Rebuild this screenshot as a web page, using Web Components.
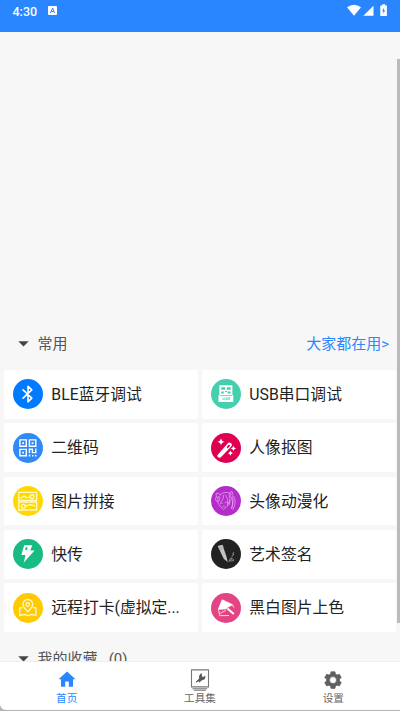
<!DOCTYPE html>
<html lang="zh-CN">
<head>
<meta charset="utf-8">
<title>工具</title>
<style>
html,body{margin:0;height:100%;overflow:hidden}
body{font-family:Roboto,"Noto Sans CJK SC",sans-serif;background:#b4b4b4}
</style>
</head>
<body>
<tool-app></tool-app>
<script>
const define = (name, render) => customElements.define(name, class extends HTMLElement {
  connectedCallback() {
    if (this.shadowRoot) return;
    this.attachShadow({mode: 'open'}).innerHTML = render(this);
  }
});

const icons = {
  bluetooth: ['#007bff', '<path d="M10 10.9l8.8 8.3L15 22.8V7.2l3.8 3.7L10 19.2" fill="none" stroke="#fff" stroke-width="1.6" stroke-linejoin="round" stroke-linecap="round"/>'],
  usb: ['#45cfae', '<path d="M8.4 6.3h13v9.9h.9v6.8H7.5v-6.8h.9z" fill="#fff"/><path d="M10.2 8.2h4v2.6h-4zM15.8 8.2h3.8v2.6h-3.8zM10.2 12.6h2.6v1.8h-2.6zM14 12h2v1h-2zM16.6 12.6h3v1.8h-3zM9 16.2h12v.7H9z" fill="#45cfae"/><path d="M11.8 18.8v1.7h1.8v-1.7M16.5 18.8h-1.7v.9h1.6v.9h-1.7M17.4 18.5v2.2h1.4v-2.2z" fill="none" stroke="#45cfae" stroke-width=".6"/>'],
  qr: ['#3189f7', '<g fill="none" stroke="#fff" stroke-width="1.4"><path d="M6.9 6.9h6.4v6.4H6.9zM16.4 6.9h6.4v6.4h-6.4zM6.9 16.4h6.4v6.4H6.9zM16.4 20v-3.8h3v3.4h3.4v-4"/></g><path d="M9.2 9.2h1.8V11H9.2zM18.7 9.2h1.8V11h-1.8zM9.2 18.7h1.8v1.8H9.2zM15.7 21.5h1.6v2h-1.6zM19 22h1.5v1.5H19zM22 22h1.5v1.5H22z" fill="#fff"/>'],
  wand: ['#df0051', '<path d="M6.2 22.4L16.6 10.4a2.4 2.4 0 0 1 3.7 3.1L9.6 24.6q-3.2.5-3.4-2.2z" fill="#fff"/><path d="M15.6 14.1l2.2-2.4q1.3 0 1.2 1.2l-2.3 2.5z" fill="#df0051"/><path d="M10 5.5l1.1 2.2 2.2 1.1-2.2 1.1-1.1 2.2-1.1-2.2-2.2-1.1 2.2-1.1zM22.4 12.7l.9 1.8 1.8.9-1.8.9-.9 1.8-.9-1.8-1.8-.9 1.8-.9zM19.4 17.6l.9 1.7 1.7.9-1.7.9-.9 1.7-.9-1.7-1.7-.9 1.7-.9z" fill="#fff"/>'],
  collage: ['#ffd800', '<g fill="none" stroke="#fff9c4" stroke-width="1.35"><path d="M5.8 6.4h17.8v8H5.8zM5.8 16h17.8v8H5.8z"/><circle cx="19" cy="10.6" r="1.9"/><circle cx="10.4" cy="20.2" r="1.9"/><path d="M7.5 12.3l3.4-2.2 2.7 1.5 3.6-.5M12.3 20.3l3-1.1 2.5-.6 4 1.4"/></g>'],
  anime: ['#b52ccb', '<g fill="none" stroke="#e6a9ee" stroke-width=".75" stroke-linecap="round"><path d="M6.5 11.5q-2.2-2.2-1.3-4.3 2.8-.2 4.5 1.7M9.5 8.5q4.4-3.7 9.3-1.2M8 10q-3.2 5.4 1 10.2l3.4 3.2 4.2-3.4 2-5.5M9 11q.5 2.4-1.5 4.4M12.4 9.3q.5 5-3 7M14.6 9q3.4 4 2 9.4M18 8.6q2.2 5.8.4 9.8M18.6 7.4q5.6 1.5 5.6 8.6-.2 3.8-2.2 7.6M19.2 9.2q4 6.2 1.5 13.2M21.6 10.8q1.4 4.6-1 11.4M18.9 6.9l2-1.6.9 2.6M9.6 17.2l1.8.1M14 16.6l1.5-.5M11.9 20.3h1.8M5.3 10.6l-.8 3.3 2 2.1"/></g>'],
  bolt: ['#18bc83', '<path d="M11.2 6.3h8.1l-2.1 5.2h4.3L10.8 23.6l1.7-7.7H8.3z" fill="#fff"/><path d="M12.8 8.2h1.8l-.5 2.9h-2.2z" fill="#18bc83"/>'],
  sign: ['#222', '<path d="M6.7 7.1l4.8-1.3 4 12 1.2 5.2-4-3.3z" fill="#c4c4c4"/><path d="M7.7 9l5-1.5M8.2 10.7l4.5-1.4" stroke="#999" stroke-width=".6"/><path d="M17.4 22.6q3.8-2.4 4-3.4-2.3-.2-2.7 1-.6 2.3 1.7 1.8l2.3-1.5-.6 1.8M20.6 17.6l2.3-2.1-1.3-.3 1.3-2" fill="none" stroke="#999" stroke-width=".9"/>'],
  map: ['#ffca00', '<g fill="none" stroke="#fff7cc" stroke-width="1.35" stroke-linejoin="round"><path d="M14.8 18.8q-4.9-5-4.9-7.4a4.9 4.9 0 0 1 9.8 0q0 2.4-4.9 7.4z"/><circle cx="14.8" cy="11.5" r="1.8"/><path d="M9.5 14.7H6.8v7.8l4.3-1.2 4 1.4 4-1.3 3.9 1.1v-7.8H20"/></g>'],
  paint: ['#e34484', '<path d="M11.2 6.8l10.3 4.9-4.9 2.6-1.6 1.6-7.6.3z" fill="#fff" stroke="#fff" stroke-width=".8" stroke-linejoin="round"/><path d="M7.4 16.2l1.4 6.5 9.2-.2M9.2 20.4l5.6-3M21.6 11.8l1.2 2.8" fill="none" stroke="#fbd5e3" stroke-width="1"/><path d="M16.4 15.4l6.4 5.6" stroke="#fff" stroke-width="2"/>']
};

define('round-icon', el => {
  const [color, art] = icons[el.getAttribute('name')];
  return `<style>:host{display:block;flex:none;width:30px;height:30px}svg{display:block}</style>
  <svg width="30" height="30" viewBox="0 0 30 30"><circle cx="15" cy="15" r="15" fill="${color}"/>${art}</svg>`;
});

define('tool-card', el => `<style>
:host{display:flex;align-items:center;box-sizing:border-box;min-width:0;background:#fff;border-radius:2px;padding:0 9px;gap:8.3px;color:#222;font-size:15.8px;line-height:24px}
span{white-space:nowrap;padding-top:1.6px}
</style><round-icon name="${el.getAttribute('icon')}"></round-icon><span><slot></slot></span>`);

define('section-head', () => `<style>
:host{display:flex;align-items:center;font-size:15px;line-height:22px;color:#555;padding:0 11px 0 18px}
svg{margin-right:8.5px;flex:none}
.more{margin-left:auto;color:#2b87ff}
</style><svg width="11" height="6" viewBox="0 0 11 6"><path d="M.3.2h10.4L5.5 5.6z" fill="#444"/></svg><span><slot></slot></span><span class="more"><slot name="more"></slot></span>`);

define('status-bar', () => `<style>
:host{display:flex;box-sizing:border-box;height:32px;background:#2a86ff;color:#fff;padding:3px 12px 0 12.5px;font-size:12.5px;font-weight:500;line-height:17px}
.a{margin:3px 0 0 11px}.r{margin-left:auto}
</style><span>4:30</span><svg class="a" width="9" height="9" viewBox="0 0 9 9"><rect width="9" height="9" rx="1" fill="#fff"/><path d="M2.4 7L4.7 2 6.4 7M3.3 5.5h2.4" fill="none" stroke="#2a86ff" stroke-width="1"/></svg>
<svg class="r" width="41" height="16" viewBox="0 0 41 16" fill="#fff"><path d="M0 4.2q7-5 14 0L7 12.8zM26.5 2.8v10H16.3zM33.3 2.5h2V1.2h3v1.3h1.6v10.4h-6.6z"/><path d="M37.2 4.4l-2.1 3.8h1.4l-.4 2.8 2.1-3.7h-1.3z" fill="#2a86ff"/></svg>`);

define('nav-item', el => `<style>
:host{display:flex;flex-direction:column;align-items:center;color:#666;font-size:10.6px;line-height:15px;padding-top:5.5px}
:host([active]){color:#2a86ff}
svg{display:block;width:24px;height:24px;margin-bottom:-.5px}
</style>${{
  home:'<svg viewBox="0 0 24 24" fill="#2a86ff"><path d="M12 3.4L3.5 11.2H6v7.6h4.2v-5.2h3.6v5.2H18v-7.6h2.5z"/></svg>',
  tools:'<svg viewBox="0 0 24 24"><path d="M3.5 1.9h17v17h-17zM4.4 20.7h14.8M6 22.3h12" fill="none" stroke="#777" stroke-width="1.1"/><path d="M7.9 14.2l3.6-3.6q-.5-3.6 1.8-5l.2 2.6 1.5 1.2 2.1-1q.2 3.4-3 3.3l-2.8 2.4-.7-1.4z" fill="#555" stroke="#555" stroke-width=".8"/></svg>',
  settings:'<svg viewBox="0 0 24 24" fill="#606060"><path fill-rule="evenodd" stroke="#606060" stroke-width=".7" stroke-linejoin="round" d="M10 3.8h4l.4 2.2 1.7 1 2.2-.8 2 3.4-1.8 1.5v2l1.8 1.5-2 3.4-2.2-.8-1.7 1-.4 2.2h-4l-.4-2.2-1.7-1-2.2.8-2-3.4 1.8-1.5v-2L3.7 9.6l2-3.4 2.2.8 1.7-1zM12 8.6a3.5 3.5 0 1 0 0 7 3.5 3.5 0 0 0 0-7z"/></svg>'
}[el.getAttribute('icon')]}<slot></slot>`);

define('tab-bar', () => `<style>:host{display:grid;grid-template-columns:repeat(3,1fr);box-sizing:border-box;flex:none;height:49px;background:#fff;border-top:1px solid #eee;border-bottom-left-radius:6px}</style><slot></slot>`);

define('scroll-thumb', () => `<style>:host{position:absolute;right:0;top:27px;width:3.5px;height:564px;background:#bbb}</style>`);

define('tool-app', () => `<style>
:host{display:flex;flex-direction:column;height:710px;overflow:hidden}
status-bar{flex:none}
main{position:relative;flex:1;min-height:0;overflow:hidden;background:#f7f7f7;padding-top:301px;box-sizing:border-box}
.grid{display:grid;grid-template-columns:194px 194px;grid-auto-rows:48.75px;gap:4.55px 4px;padding:0 4px;margin:15px 0 16px}
</style>
<status-bar></status-bar>
<main>
<section-head>常用<span slot="more">大家都在用&gt;</span></section-head>
<div class="grid">
<tool-card icon="bluetooth">BLE蓝牙调试</tool-card><tool-card icon="usb">USB串口调试</tool-card>
<tool-card icon="qr">二维码</tool-card><tool-card icon="wand">人像抠图</tool-card>
<tool-card icon="collage">图片拼接</tool-card><tool-card icon="anime">头像动漫化</tool-card>
<tool-card icon="bolt">快传</tool-card><tool-card icon="sign">艺术签名</tool-card>
<tool-card icon="map">远程打卡(虚拟定...</tool-card><tool-card icon="paint">黑白图片上色</tool-card>
</div>
<section-head>我的收藏&nbsp;&nbsp; (0)</section-head>
<scroll-thumb></scroll-thumb>
</main>
<tab-bar><nav-item icon="home" active>首页</nav-item><nav-item icon="tools">工具集</nav-item><nav-item icon="settings">设置</nav-item></tab-bar>`);
</script>
</body>
</html>
